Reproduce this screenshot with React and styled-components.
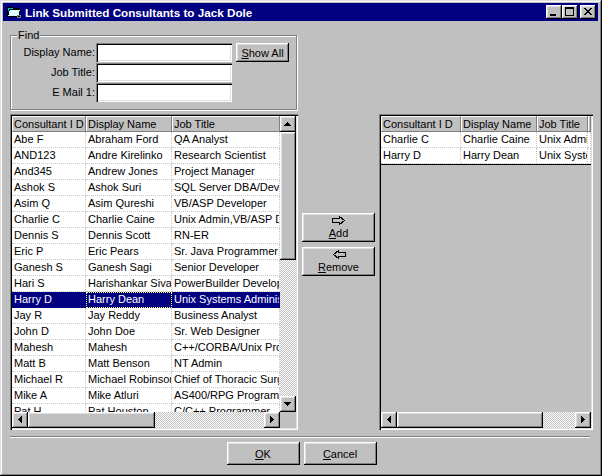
import React from 'react';
import styled, { createGlobalStyle } from 'styled-components';

const Global = createGlobalStyle`
  html, body { margin: 0; padding: 0; background: #c0c0c0; }
  body { font-family: "Liberation Sans", Arial, sans-serif; font-size: 11px; color: #000; }
  * { box-sizing: border-box; }
`;

const raised = `
  box-shadow: inset -1px -1px #000, inset 1px 1px #fff, inset -2px -2px #808080, inset 2px 2px #dfdfdf;
`;
const sunken = `
  box-shadow: inset 1px 1px #808080, inset 2px 2px #000, inset -1px -1px #fff, inset -2px -2px #dfdfdf;
`;

const Window = styled.div`
  width: 602px;
  height: 476px;
  background: #c0c0c0;
  display: flex;
  flex-direction: column;
  padding: 3px 4px 3px 3px;
  box-shadow: inset -1px -1px #000, inset 1px 1px #dfdfdf, inset -2px -2px #808080, inset 2px 2px #fff;
`;

const TitleBar = styled.div`
  height: 18px;
  flex-shrink: 0;
  background: #000080;
  display: flex;
  align-items: center;
  padding: 0 2px 0 3px;
`;

const TitleIcon = styled.svg`
  width: 16px;
  height: 16px;
  flex-shrink: 0;
`;

const TitleText = styled.div`
  margin-left: 3px;
  color: #fff;
  font-weight: bold;
  font-size: 11.7px;
  white-space: nowrap;
`;

const CaptionButtons = styled.div`
  margin-left: auto;
  display: flex;
  align-items: center;
`;

const CaptionButton = styled.div`
  width: 16px;
  height: 14px;
  background: #c0c0c0;
  margin-left: ${p => p.$gap || 0}px;
  ${raised}
  svg { display: block; }
`;

const Body = styled.div`
  flex: 1;
  display: flex;
  flex-direction: column;
  padding: 14px 5px 8px 7px;
`;

const Group = styled.div`
  position: relative;
  width: 287px;
  height: 75px;
  flex-shrink: 0;
  border: 1px solid #808080;
  box-shadow: 1px 1px 0 #fff, inset 1px 1px 0 #fff;
  padding-top: 7px;
  margin-bottom: 4px;
`;

const Legend = styled.span`
  position: absolute;
  top: -7px;
  left: 6px;
  padding: 0 1px;
  line-height: 13px;
  background: #c0c0c0;
`;

const FindGrid = styled.div`
  display: grid;
  grid-template-columns: 85px 136px 57px;
  grid-auto-rows: 19px;
  row-gap: 1px;
`;

const Label = styled.label`
  text-align: right;
  line-height: 19px;
  padding-right: 1px;
  white-space: nowrap;
`;

const TextInput = styled.div`
  height: 19px;
  background: #fff;
  ${sunken}
`;

const Button = styled.button`
  font: inherit;
  color: #000;
  background: #c0c0c0;
  border: none;
  padding: 0;
  margin: 0 0 0 ${p => p.$ml || 0}px;
  width: ${p => p.$w}px;
  height: ${p => p.$h}px;
  display: flex;
  flex-direction: column;
  align-items: center;
  justify-content: center;
  gap: 2px;
  ${raised}
  u { text-decoration: underline; }
`;

const ListsRow = styled.div`
  display: flex;
  height: 316px;
  flex-shrink: 0;
  gap: 4px;
  margin-bottom: 6px;
`;

const GridBox = styled.div`
  width: ${p => p.$w}px;
  height: 316px;
  padding: 2px;
  background: #c0c0c0;
  ${sunken}
  display: grid;
  grid-template-columns: ${p => (p.$vscroll ? '1fr 16px' : '1fr')};
  grid-template-rows: 1fr 16px;
  overflow: hidden;
`;

const GridContent = styled.div`
  overflow: hidden;
  display: flex;
  flex-direction: column;
  background: ${p => (p.$fill ? '#fff' : '#c0c0c0')};
  min-width: 0;
`;

const HeaderRow = styled.div`
  display: flex;
  height: 16px;
  flex-shrink: 0;
  background: #c0c0c0;
`;

const HeaderCell = styled.div`
  width: ${p => (p.$w ? p.$w + 'px' : 'auto')};
  flex: ${p => (p.$w ? '0 0 auto' : '1 1 0')};
  min-width: 0;
  padding-left: 2px;
  line-height: 16px;
  white-space: nowrap;
  overflow: hidden;
  box-shadow: inset -1px -1px #808080, inset 1px 1px #fff;
`;

const RowsBlock = styled.div`
  display: flex;
  flex-direction: column;
  flex-shrink: 0;
  border-bottom: ${p => (p.$endLine ? '1px solid #000' : 'none')};
`;

const Row = styled.div`
  display: flex;
  height: 16px;
  flex-shrink: 0;
  background: ${p => (p.$sel ? '#000080' : '#fff')};
  color: ${p => (p.$sel ? '#fff' : '#000')};
`;

const Cell = styled.div`
  width: ${p => (p.$w ? p.$w + 'px' : 'auto')};
  flex: ${p => (p.$w ? '0 0 auto' : '1 1 0')};
  min-width: 0;
  padding-left: 2px;
  line-height: 15px;
  white-space: nowrap;
  overflow: hidden;
  border-right: 1px dotted ${p => (p.$sel ? '#000080' : '#c8c8c8')};
  border-bottom: 1px dotted ${p => (p.$sel ? '#000080' : '#c8c8c8')};
  outline: ${p => (p.$focus ? '1px dotted #ffff60' : 'none')};
  outline-offset: -1px;
`;

const dither = `
  background: repeating-conic-gradient(#c0c0c0 0% 25%, #fff 0% 50%) 0 0 / 2px 2px;
`;

const VScroll = styled.div`
  display: flex;
  flex-direction: column;
  min-height: 0;
`;

const HScroll = styled.div`
  display: flex;
  min-width: 0;
`;

const ScrollButton = styled.div`
  width: 16px;
  height: 16px;
  flex-shrink: 0;
  background: #c0c0c0;
  ${raised}
  svg { display: block; }
`;

const Thumb = styled.div`
  flex-shrink: 0;
  background: #c0c0c0;
  width: ${p => (p.$horizontal ? p.$size + 'px' : '16px')};
  height: ${p => (p.$horizontal ? '16px' : p.$size + 'px')};
  ${raised}
`;

const Track = styled.div`
  flex: 1;
  ${dither}
`;

const Corner = styled.div`
  background: #c0c0c0;
`;

const MiddleColumn = styled.div`
  width: 73px;
  display: flex;
  flex-direction: column;
  gap: 5px;
  padding-top: 99px;
`;

const Separator = styled.div`
  width: 580px;
  height: 2px;
  flex-shrink: 0;
  border-top: 1px solid #808080;
  border-bottom: 1px solid #fff;
  margin-bottom: 4px;
`;

const ButtonRow = styled.div`
  display: flex;
  justify-content: center;
  gap: 4px;
`;

const Glyph = styled.svg`
  display: block;
`;

const Arrow = ({ dir }) => {
  const rects = {
    up: [[7, 6, 1, 1], [6, 7, 3, 1], [5, 8, 5, 1], [4, 9, 7, 1]],
    down: [[4, 6, 7, 1], [5, 7, 5, 1], [6, 8, 3, 1], [7, 9, 1, 1]],
    left: [[6, 7, 1, 1], [7, 6, 1, 3], [8, 5, 1, 5], [9, 4, 1, 7]],
    right: [[6, 4, 1, 7], [7, 5, 1, 5], [8, 6, 1, 3], [9, 7, 1, 1]],
  }[dir];
  return (
    <Glyph width="16" height="16" viewBox="0 0 16 16" shapeRendering="crispEdges">
      {rects.map((r, i) => (
        <rect key={i} x={r[0]} y={r[1]} width={r[2]} height={r[3]} fill="#000" />
      ))}
    </Glyph>
  );
};

const MoveArrow = ({ left }) => (
  <Glyph width="14" height="9" viewBox="0 0 14 9" shapeRendering="crispEdges">
    <path
      d={left
        ? 'M13.5,2.5 H6.5 V0.5 L1.5,4.5 L6.5,8.5 V6.5 H13.5 Z'
        : 'M0.5,2.5 H7.5 V0.5 L12.5,4.5 L7.5,8.5 V6.5 H0.5 Z'}
      fill="none"
      stroke="#000"
      strokeWidth="1"
    />
  </Glyph>
);

const leftRows = [
  ['Abe F', 'Abraham Ford', 'QA Analyst'],
  ['AND123', 'Andre Kirelinko', 'Research Scientist'],
  ['And345', 'Andrew Jones', 'Project Manager'],
  ['Ashok S', 'Ashok Suri', 'SQL Server DBA/Developer'],
  ['Asim Q', 'Asim Qureshi', 'VB/ASP Developer'],
  ['Charlie C', 'Charlie Caine', 'Unix Admin,VB/ASP Developer'],
  ['Dennis S', 'Dennis Scott', 'RN-ER'],
  ['Eric P', 'Eric Pears', 'Sr. Java Programmer'],
  ['Ganesh S', 'Ganesh Sagi', 'Senior Developer'],
  ['Hari S', 'Harishankar Sivaraman', 'PowerBuilder Developer'],
  ['Harry D', 'Harry Dean', 'Unix Systems Administrator'],
  ['Jay R', 'Jay Reddy', 'Business Analyst'],
  ['John D', 'John Doe', 'Sr. Web Designer'],
  ['Mahesh', 'Mahesh', 'C++/CORBA/Unix Programmer'],
  ['Matt B', 'Matt Benson', 'NT Admin'],
  ['Michael R', 'Michael Robinson', 'Chief of Thoracic Surgery'],
  ['Mike A', 'Mike Atluri', 'AS400/RPG Programmer'],
  ['Pat H', 'Pat Houston', 'C/C++ Programmer'],
];

const rightRows = [
  ['Charlie C', 'Charlie Caine', 'Unix Admin,VB/ASP Developer', ''],
  ['Harry D', 'Harry Dean', 'Unix Systems Administrator', ''],
];

const headers = ['Consultant I D', 'Display Name', 'Job Title'];

function DataGrid({ width, columns, headerLabels, rows, selected, focusCol, vscroll, vthumb, hthumb, fill, endLine }) {
  return (
    <GridBox $w={width} $vscroll={vscroll}>
      <GridContent $fill={fill}>
        <HeaderRow>
          {columns.map((w, i) => (
            <HeaderCell key={i} $w={w}>{headerLabels[i] || ''}</HeaderCell>
          ))}
        </HeaderRow>
        <RowsBlock $endLine={endLine}>
          {rows.map((r, ri) => (
            <Row key={ri} $sel={ri === selected}>
              {columns.map((w, ci) => (
                <Cell key={ci} $w={w} $sel={ri === selected} $focus={ri === selected && ci === focusCol}>
                  {r[ci]}
                </Cell>
              ))}
            </Row>
          ))}
        </RowsBlock>
      </GridContent>
      {vscroll && (
        <VScroll>
          <ScrollButton><Arrow dir="up" /></ScrollButton>
          <Thumb $size={vthumb} />
          <Track />
          <ScrollButton><Arrow dir="down" /></ScrollButton>
        </VScroll>
      )}
      <HScroll>
        <ScrollButton><Arrow dir="left" /></ScrollButton>
        <Thumb $horizontal $size={hthumb} />
        <Track />
        <ScrollButton><Arrow dir="right" /></ScrollButton>
      </HScroll>
      {vscroll && <Corner />}
    </GridBox>
  );
}

export default function App() {
  return (
    <>
      <Global />
      <Window>
        <TitleBar>
          <TitleIcon viewBox="0 0 16 16" shapeRendering="crispEdges">
            <path d="M1.5,3.5 H6.5 L7.5,4.5 H13.5 V12.5 H1.5 Z" fill="#00c0c0" stroke="#000" />
            <path d="M3.5,5.5 H14.5 L12.5,12.5 H1.5 Z" fill="#e0ffff" stroke="#000" />
            <rect x="11" y="11" width="4" height="3" fill="#808080" />
            <rect x="12" y="12" width="2" height="1" fill="#000" />
          </TitleIcon>
          <TitleText>Link Submitted Consultants to Jack Dole</TitleText>
          <CaptionButtons>
            <CaptionButton>
              <Glyph width="16" height="14" viewBox="0 0 16 14" shapeRendering="crispEdges">
                <rect x="4" y="9" width="6" height="2" fill="#000" />
              </Glyph>
            </CaptionButton>
            <CaptionButton>
              <Glyph width="16" height="14" viewBox="0 0 16 14" shapeRendering="crispEdges">
                <rect x="3.5" y="2.5" width="8" height="8" fill="none" stroke="#000" />
                <rect x="3" y="3" width="9" height="1" fill="#000" />
              </Glyph>
            </CaptionButton>
            <CaptionButton $gap={2}>
              <Glyph width="16" height="14" viewBox="0 0 16 14" shapeRendering="crispEdges">
                {[0, 1, 2, 3, 4, 5, 6].map(i => (
                  <React.Fragment key={i}>
                    <rect x={4 + i} y={3 + i} width="2" height="1" fill="#000" />
                    <rect x={10 - i} y={3 + i} width="2" height="1" fill="#000" />
                  </React.Fragment>
                ))}
              </Glyph>
            </CaptionButton>
          </CaptionButtons>
        </TitleBar>
        <Body>
          <Group>
            <Legend>Find</Legend>
            <FindGrid>
              <Label>Display Name:</Label>
              <TextInput />
              <Button $w={53} $h={19} $ml={4}><span><u>S</u>how All</span></Button>
              <Label>Job Title:</Label>
              <TextInput />
              <span />
              <Label>E Mail 1:</Label>
              <TextInput />
              <span />
            </FindGrid>
          </Group>
          <ListsRow>
            <DataGrid
              width={288}
              columns={[74, 86, null]}
              headerLabels={headers}
              rows={leftRows}
              selected={10}
              focusCol={1}
              vscroll
              vthumb={128}
              hthumb={127}
              fill
            />
            <MiddleColumn>
              <Button $w={73} $h={29}>
                <MoveArrow />
                <span><u>A</u>dd</span>
              </Button>
              <Button $w={73} $h={29}>
                <MoveArrow left />
                <span><u>R</u>emove</span>
              </Button>
            </MiddleColumn>
            <DataGrid
              width={214}
              columns={[80, 76, 51, null]}
              headerLabels={headers}
              rows={rightRows}
              selected={-1}
              hthumb={146}
              endLine
            />
          </ListsRow>
          <Separator />
          <ButtonRow>
            <Button $w={73} $h={23}><span><u>O</u>K</span></Button>
            <Button $w={73} $h={23}><span><u>C</u>ancel</span></Button>
          </ButtonRow>
        </Body>
      </Window>
    </>
  );
}
